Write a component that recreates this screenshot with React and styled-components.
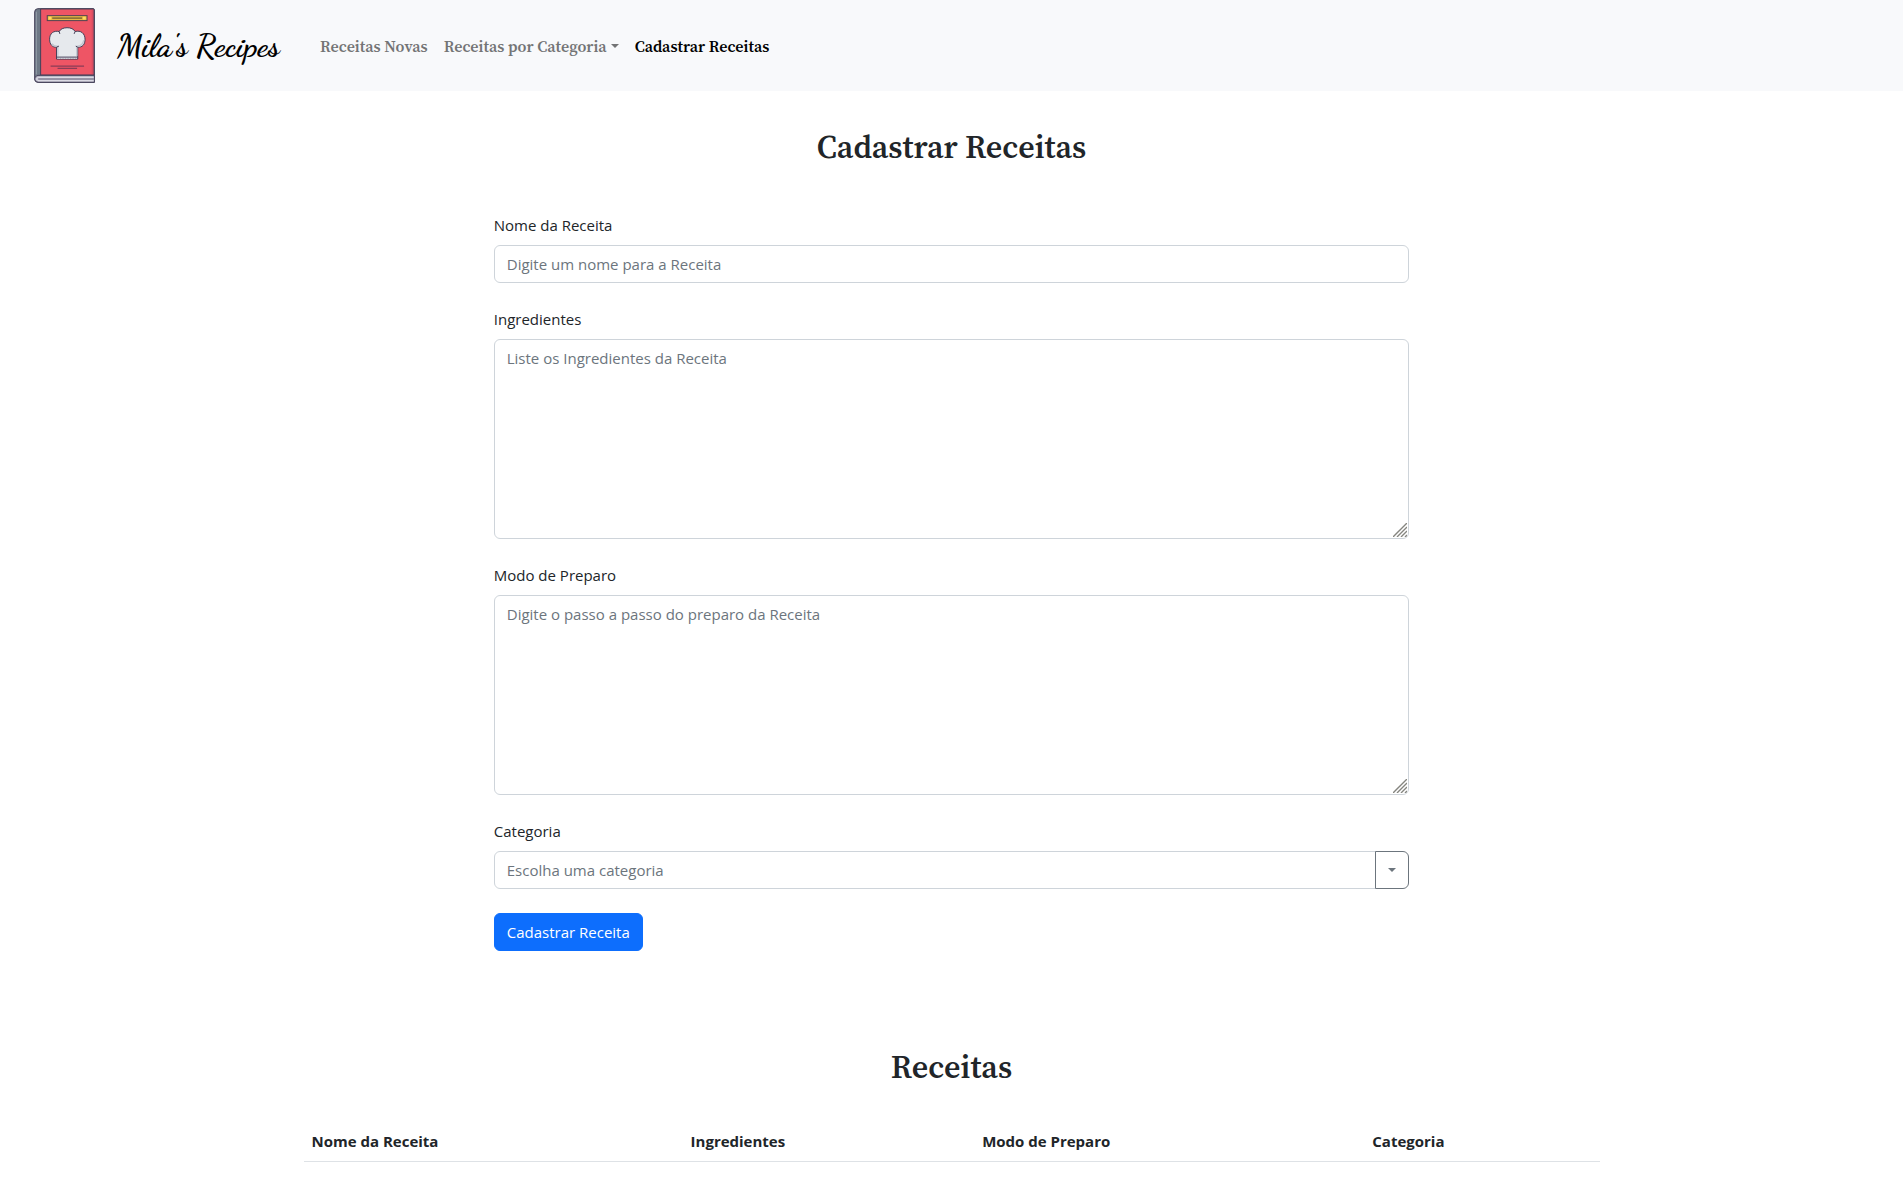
import React from "react";
import styled, { createGlobalStyle } from "styled-components";

const sans = '"Segoe UI", "Open Sans", "Noto Sans", sans-serif';
const serif = '"Source Serif Pro", "Source Serif 4", "Liberation Serif", serif';
const script = '"Dancing Script", cursive';

const GlobalStyle = createGlobalStyle`
  *, *::before, *::after { box-sizing: border-box; }
  body {
    margin: 0;
    background: #fff;
    color: #212529;
    font: 400 15px/24px ${sans};
  }
`;

const Header = styled.header`
  display: flex;
  align-items: center;
  padding: 8px 34px;
  background: #f8f9fb;
`;

const Brand = styled.a`
  display: flex;
  align-items: center;
  gap: 22px;
  min-width: 278px;
  color: #000;
  font: 700 32px/40px ${script};
  text-decoration: none;
  white-space: nowrap;
`;

const Logo = styled.svg`
  display: block;
  width: 61px;
  height: 75px;
`;

const NavList = styled.ul`
  display: flex;
  margin: 0;
  padding: 0;
  list-style: none;
`;

const NavLink = styled.a`
  display: block;
  padding: 8px;
  color: ${(p) => (p.$active ? "#000" : "#737475")};
  font: 600 16px/24px ${serif};
  font-optical-sizing: none;
  text-decoration: none;
  white-space: nowrap;
`;

const Caret = styled.span`
  display: inline-block;
  border: 4px solid transparent;
  border-top-color: currentColor;
  border-bottom: 0;
  vertical-align: 4px;

  ${NavLink} & { margin-left: 4px; }
`;

const Title = styled.h1`
  margin: 0;
  font: 600 32px/40px ${serif};
  font-optical-sizing: none;
  text-align: center;
`;

const FormSection = styled.main`
  padding: 36px 0 96px;
`;

const Form = styled.form`
  display: flex;
  flex-direction: column;
  align-items: flex-start;
  gap: 24px;
  width: 50%;
  margin: 46px auto 0;
  padding: 0 18px;
`;

const Field = styled.div`
  display: flex;
  flex-direction: column;
  gap: 8px;
  width: 100%;
`;

const control = `
  display: block;
  width: 100%;
  margin: 0;
  padding: 6px 12px;
  border: 1px solid #ced4da;
  border-radius: 6px;
  background: #fff;
  color: #212529;
  font: 400 15px/24px ${sans};
  &::placeholder { color: #6c757d; opacity: 1; }
`;

const Input = styled.input`
  ${control}
  height: 38px;
`;

const GroupInput = styled(Input)`
  flex: 1;
  width: auto;
  border-radius: 6px 0 0 6px;
`;

const AreaFrame = styled.div`
  position: relative;
`;

const TextArea = styled.textarea`
  ${control}
  height: 200px;
  resize: vertical;
  &::-webkit-resizer { display: none; }
`;

const Grip = styled.svg`
  position: absolute;
  right: 2px;
  bottom: 2px;
  width: 14px;
  height: 14px;
  pointer-events: none;
`;

const InputGroup = styled.div`
  display: flex;
`;

const DropButton = styled.button`
  display: flex;
  align-items: center;
  justify-content: center;
  width: 34px;
  height: 38px;
  margin-left: -1px;
  padding: 0;
  border: 1px solid #6c757d;
  border-radius: 0 6px 6px 0;
  background: #fff;
  color: #6c757d;
`;

const SubmitButton = styled.button`
  padding: 6px 12px;
  border: 1px solid #0d6efd;
  border-radius: 6px;
  background: #0d6efd;
  color: #fff;
  font: 400 15px/24px ${sans};
`;

const ListSection = styled.section`
  max-width: 1320px;
  margin: 0 auto;
  padding: 0 12px;
`;

const Table = styled.table`
  width: 100%;
  margin: 34px 0 16px;
  border-collapse: separate;
  border-spacing: 0;
  table-layout: fixed;
`;

const HeadCell = styled.th`
  width: ${(p) => p.$width};
  padding: 8px;
  border-bottom: 1px solid #dee2e6;
  font-weight: 700;
  text-align: left;
`;

const columns = [
  { name: "Nome da Receita", width: "29.25%" },
  { name: "Ingredientes", width: "22.5%" },
  { name: "Modo de Preparo", width: "30.1%" },
  { name: "Categoria", width: "auto" },
];

function RecipeBook() {
  return (
    <Logo viewBox="27 23 184 226" preserveAspectRatio="none" aria-hidden="true">
      <path d="M38 25H206Q209 25 209 28V247H38Q29 246 29 236V35Q29 26 38 25Z" fill="#6d7885" stroke="#444058" strokeWidth="3" />
      <path d="M47 26H206Q208 26 208 29V225H47Z" fill="#ee5565" stroke="#444058" strokeWidth="3" />
      <path d="M34 34V223" stroke="#949daa" strokeWidth="3" />
      <path d="M203 29V222" stroke="#d94c60" strokeWidth="4" />
      <path d="M209 226H39Q29 227 29 237Q30 247 40 247H209Z" fill="#b4b3c2" stroke="#444058" strokeWidth="3" />
      <path d="M207 232H41Q35 233 35 237Q36 242 42 242H207" fill="none" stroke="#e3e3eb" strokeWidth="3" />
      <path d="M40 237H207" stroke="#77738a" strokeWidth="3" />
      <rect x="67" y="46" width="120" height="15" fill="#e7b944" stroke="#514252" strokeWidth="3" />
      <path d="M82 53.5H172" stroke="#897036" strokeWidth="5" />
      <path d="M71 53.5H79M175 53.5H183" stroke="#ffdb61" strokeWidth="8" />
      <path d="M95 177V141C82 142 74 132 74 117C74 99 87 90 103 94C109 79 144 78 151 94C168 89 181 100 181 117C181 133 173 142 159 141V177Z" fill="#e6e9ed" stroke="#444058" strokeWidth="3" strokeLinejoin="round" />
      <path d="M81 130Q87 139 99 138V169M156 168V138Q174 139 177 120" fill="none" stroke="#c3c9d2" strokeWidth="4" />
      <path d="M103 94L105 101M151 94L148 101M95 141L102 138M159 141L153 138" stroke="#444058" strokeWidth="3" />
      <path d="M95 171H159" stroke="#444058" strokeWidth="3" />
      <path d="M98 175H157" stroke="#d5d9e0" strokeWidth="3" strokeDasharray="3 2" />
      <path d="M77 198H178M98 205H157" stroke="#8a3d57" strokeWidth="4" />
    </Logo>
  );
}

function AreaField({ id, label, placeholder }) {
  return (
    <Field>
      <label htmlFor={id}>{label}</label>
      <AreaFrame>
        <TextArea id={id} placeholder={placeholder} />
        <Grip viewBox="0 0 14 14" aria-hidden="true">
          <path d="M0 14L14 0M4 14L14 4M8 14L14 8M12 14L14 12" stroke="#85857f" strokeWidth="1.4" />
        </Grip>
      </AreaFrame>
    </Field>
  );
}

export default function App() {
  return (
    <>
      <GlobalStyle />
      <Header>
        <Brand href="#">
          <RecipeBook />
          Mila's Recipes
        </Brand>
        <nav>
          <NavList>
            <li><NavLink href="#novas">Receitas Novas</NavLink></li>
            <li><NavLink href="#categorias">Receitas por Categoria<Caret /></NavLink></li>
            <li><NavLink href="#cadastrar" $active aria-current="page">Cadastrar Receitas</NavLink></li>
          </NavList>
        </nav>
      </Header>
      <FormSection>
        <Title>Cadastrar Receitas</Title>
        <Form>
          <Field>
            <label htmlFor="nome">Nome da Receita</label>
            <Input id="nome" type="text" placeholder="Digite um nome para a Receita" />
          </Field>
          <AreaField id="ingredientes" label="Ingredientes" placeholder="Liste os Ingredientes da Receita" />
          <AreaField id="preparo" label="Modo de Preparo" placeholder="Digite o passo a passo do preparo da Receita" />
          <Field>
            <label htmlFor="categoria">Categoria</label>
            <InputGroup>
              <GroupInput id="categoria" type="text" placeholder="Escolha uma categoria" />
              <DropButton type="button" aria-label="Categorias"><Caret /></DropButton>
            </InputGroup>
          </Field>
          <SubmitButton type="button">Cadastrar Receita</SubmitButton>
        </Form>
      </FormSection>
      <ListSection>
        <Title as="h2">Receitas</Title>
        <Table>
          <thead>
            <tr>
              {columns.map((c) => (
                <HeadCell key={c.name} scope="col" $width={c.width}>{c.name}</HeadCell>
              ))}
            </tr>
          </thead>
        </Table>
      </ListSection>
    </>
  );
}
